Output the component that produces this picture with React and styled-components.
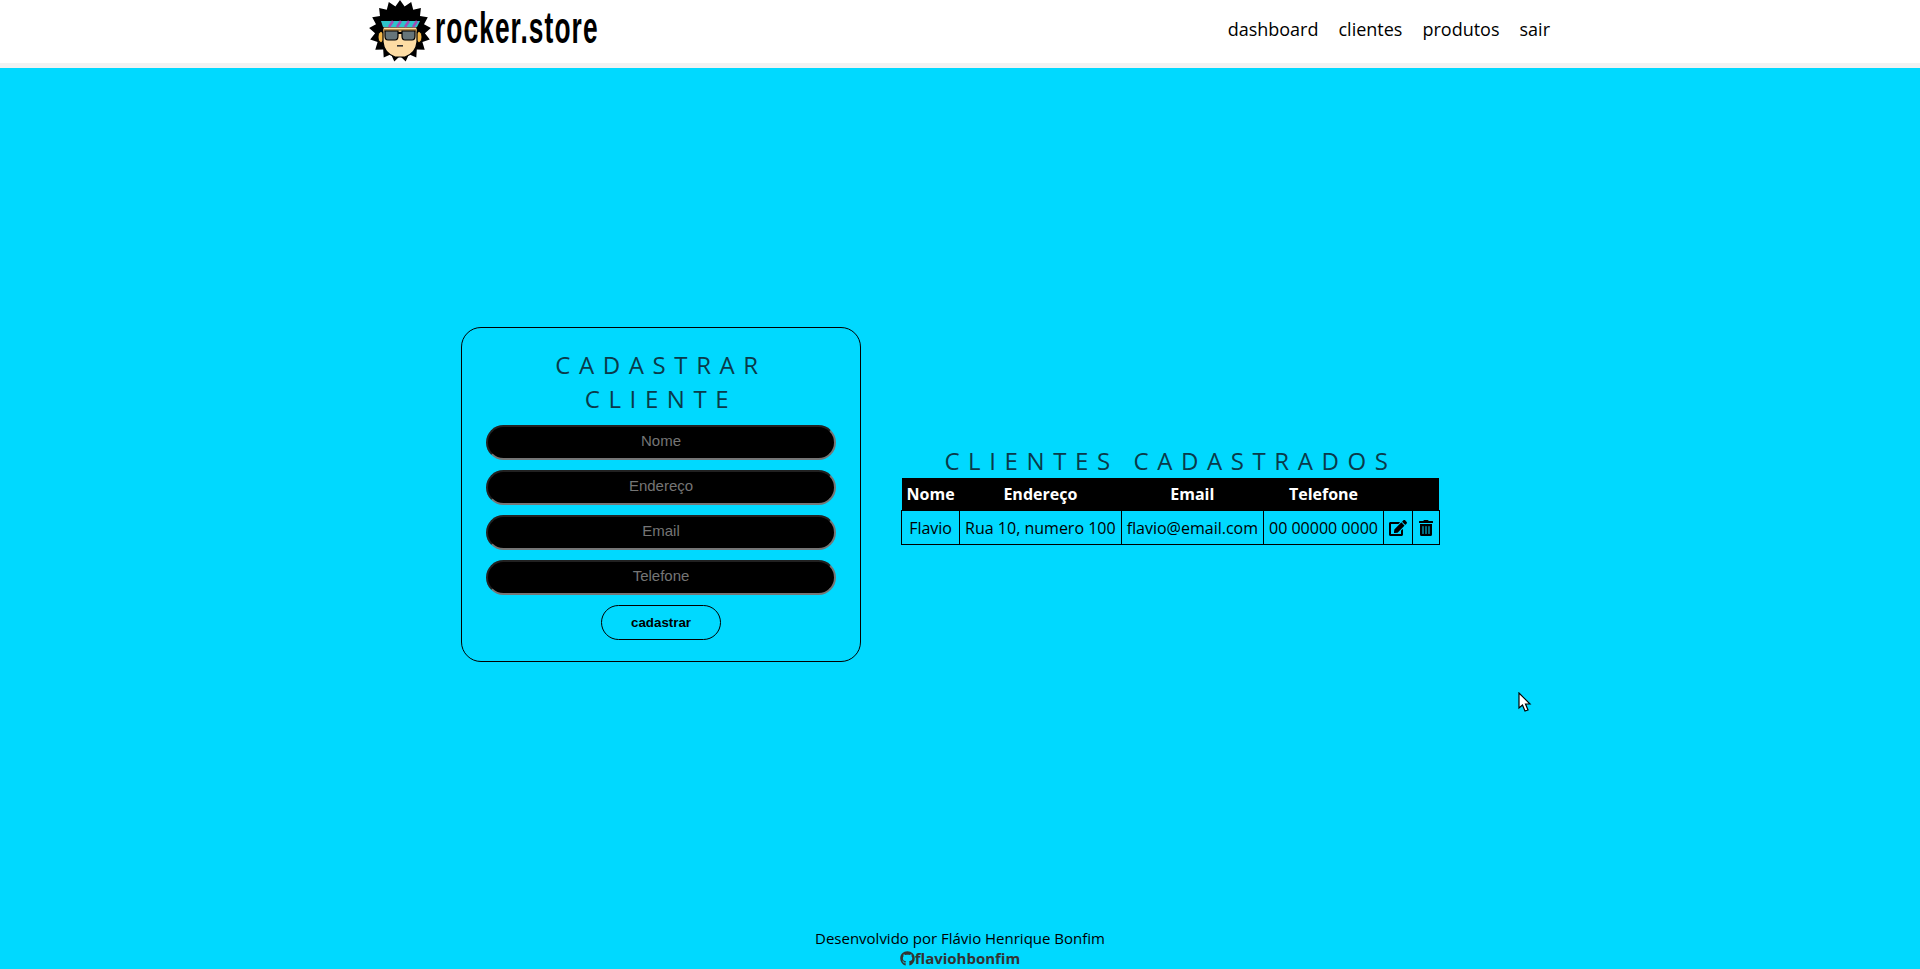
import React from "react";
import styled, { createGlobalStyle } from "styled-components";
import { FaEdit, FaTrashAlt, FaGithub } from "react-icons/fa";

const GlobalStyle = createGlobalStyle`
  html, body {
    margin: 0;
    padding: 0;
    height: 100%;
    overflow: hidden;
  }
  body {
    background: #00d9ff;
    font-family: "Open Sans", sans-serif;
    color: #000;
  }
  * {
    box-sizing: border-box;
  }
`;

const Page = styled.div`
  position: relative;
  height: 969px;
  display: flex;
  flex-direction: column;
`;

const Header = styled.header`
  height: 68px;
  flex-shrink: 0;
  background: #fff;
  border-bottom: 5px solid #f2f2f2;
  display: flex;
  justify-content: center;
`;

const HeaderInner = styled.div`
  width: 1200px;
  padding: 0 10px 0 9px;
  display: flex;
  align-items: flex-start;
  justify-content: space-between;
`;

const Logo = styled.a`
  display: flex;
  align-items: flex-start;
  gap: 3px;
  text-decoration: none;
  color: #000;
`;

const LogoText = styled.span`
  font-family: "Liberation Sans", sans-serif;
  font-weight: 700;
  font-size: 36px;
  line-height: 36px;
  margin-top: 6px;
  letter-spacing: 1.5px;
  transform: scale(0.73, 1.22);
  transform-origin: left top;
`;

const Nav = styled.nav`
  display: flex;
  gap: 20px;
  padding-top: 17px;
`;

const NavLink = styled.a`
  font-size: 18px;
  line-height: 25px;
  color: #000;
  text-decoration: none;
`;

const Main = styled.main`
  flex: 1;
  display: flex;
  align-items: center;
  justify-content: center;
  gap: 40px;
  padding-right: 19px;
`;

const FormCard = styled.form`
  width: 400px;
  height: 335px;
  border: 1px solid #000;
  border-radius: 20px;
  padding: 20px 24px 0;
  display: flex;
  flex-direction: column;
  align-items: center;
`;

const Title = styled.h2`
  margin: 0;
  font-size: 24px;
  line-height: 34px;
  font-weight: 400;
  letter-spacing: 8.6px;
  text-align: center;
  color: #0a3a4a;
`;

const FormTitle = styled(Title)`
  margin-bottom: 4px;
`;

const Field = styled.input`
  width: 350px;
  height: 35px;
  margin: 5px 0;
  padding: 0 0 5px;
  background: #000;
  border: 2px inset #767676;
  border-radius: 20px;
  text-align: center;
  font-family: "Liberation Sans", Arial, sans-serif;
  font-size: 15px;
  color: #fff;

  &::placeholder {
    color: #757575;
  }
`;

const SubmitButton = styled.button`
  width: 120px;
  height: 35px;
  margin-top: 5px;
  background: transparent;
  border: 1px solid #000;
  border-radius: 20px;
  font-family: "Liberation Sans", Arial, sans-serif;
  font-size: 13.33px;
  font-weight: 700;
  color: #000;
`;

const ListSection = styled.section`
  display: flex;
  flex-direction: column;
  align-items: center;
`;

const Table = styled.table`
  border-collapse: collapse;
  font-size: 16px;
  line-height: 22px;
`;

const HeadCell = styled.th`
  background: #000;
  color: #fff;
  padding: 5px;
  font-weight: 700;
  height: 33px;
`;

const Cell = styled.td`
  border: 1px solid #000;
  padding: 5px;
  text-align: center;
  white-space: nowrap;
  height: 34px;
`;

const IconCell = styled(Cell)`
  font-size: ${props => props.size}px;
  line-height: 0;

  svg {
    vertical-align: middle;
  }
`;

const Footer = styled.footer`
  height: 48px;
  flex-shrink: 0;
  padding-top: 7px;
  text-align: center;
  font-size: 15px;
  line-height: 20px;
`;

const GithubLink = styled.a`
  display: flex;
  align-items: center;
  justify-content: center;
  font-weight: 700;
  color: #333;
  text-decoration: none;
`;

const CursorMark = styled.svg`
  position: absolute;
  left: 1518px;
  top: 692px;
`;

const LogoMark = () => {
  // spiky hair, built as a star around the head
  const spikes = [];
  const count = 17;
  for (let i = 0; i < count * 2; i++) {
    const a = (i / (count * 2)) * Math.PI * 2 - Math.PI / 2;
    const r = i % 2 === 0 ? 31 : 25;
    spikes.push(`${(31 + r * Math.cos(a)).toFixed(1)},${(31 + r * Math.sin(a)).toFixed(1)}`);
  }
  return (
    <svg width="63" height="62" viewBox="0 0 63 62">
      <polygon points={spikes.join(" ")} fill="#000" />
      <ellipse cx="12" cy="37" rx="3" ry="5.5" fill="#f5b94a" stroke="#000" />
      <ellipse cx="50" cy="37" rx="3" ry="5.5" fill="#f5b94a" stroke="#000" />
      <path d="M14 27 H48 V42 Q47 53 36 57 H26 Q15 53 14 42 Z" fill="#fddca4" stroke="#000" strokeWidth="1.2" />
      <polygon points="12,21 51,21 48,27 14,27" fill="#2ec4c9" />
      <path d="M20 27 L24 21 M28 27 L32 21 M36 27 L40 21 M44 27 L48 21" stroke="#a44bb5" strokeWidth="2.5" />
      <rect x="14" y="29" width="34" height="2.5" fill="#b98a44" />
      <path d="M16 31 H29 V36 Q29 40 26 40 H19 Q16 40 16 36 Z" fill="#66757a" stroke="#000" strokeWidth="1.2" />
      <path d="M33 31 H46 V36 Q46 40 43 40 H36 Q33 40 33 36 Z" fill="#66757a" stroke="#000" strokeWidth="1.2" />
      <rect x="29" y="32" width="4" height="2" fill="#000" />
      <rect x="28" y="45" width="6" height="1.6" fill="#333" />
    </svg>
  );
};

const App = () => {
  return (
    <Page>
      <GlobalStyle />
      <Header>
        <HeaderInner>
          <Logo href="#">
            <LogoMark />
            <LogoText>rocker.store</LogoText>
          </Logo>
          <Nav>
            <NavLink href="#">dashboard</NavLink>
            <NavLink href="#">clientes</NavLink>
            <NavLink href="#">produtos</NavLink>
            <NavLink href="#">sair</NavLink>
          </Nav>
        </HeaderInner>
      </Header>
      <Main>
        <FormCard>
          <FormTitle>CADASTRAR CLIENTE</FormTitle>
          <Field placeholder="Nome" />
          <Field placeholder="Endereço" />
          <Field placeholder="Email" />
          <Field placeholder="Telefone" />
          <SubmitButton type="button">cadastrar</SubmitButton>
        </FormCard>
        <ListSection>
          <Title>CLIENTES CADASTRADOS</Title>
          <Table>
            <thead>
              <tr>
                <HeadCell>Nome</HeadCell>
                <HeadCell>Endereço</HeadCell>
                <HeadCell>Email</HeadCell>
                <HeadCell>Telefone</HeadCell>
                <HeadCell />
                <HeadCell />
              </tr>
            </thead>
            <tbody>
              <tr>
                <Cell>Flavio</Cell>
                <Cell>Rua 10, numero 100</Cell>
                <Cell>flavio@email.com</Cell>
                <Cell>00 00000 0000</Cell>
                <IconCell size={18}><FaEdit /></IconCell>
                <IconCell size={16}><FaTrashAlt /></IconCell>
              </tr>
            </tbody>
          </Table>
        </ListSection>
      </Main>
      <Footer>
        <div>Desenvolvido por Flávio Henrique Bonfim</div>
        <GithubLink href="#"><FaGithub />flaviohbonfim</GithubLink>
      </Footer>
      <CursorMark width="14" height="22" viewBox="0 0 14 22">
        <path d="M1 1 V16 L4.5 13 L7 19 L10 18 L7.5 12 H12 Z" fill="#fff" stroke="#000" strokeWidth="1.2" />
      </CursorMark>
    </Page>
  );
};

export default App;
